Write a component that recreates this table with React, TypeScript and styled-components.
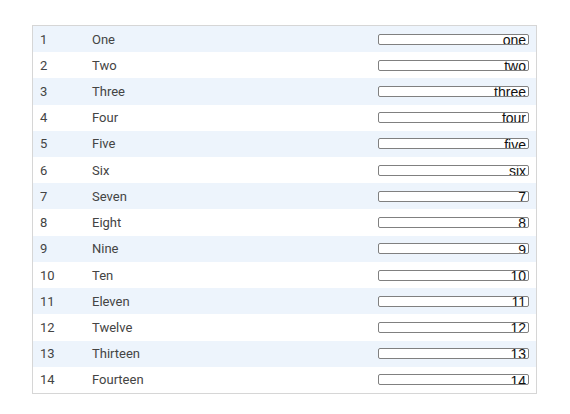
import React from "react";
import styled, { createGlobalStyle } from "styled-components";

const Global = createGlobalStyle`
  body {
    margin: 8px;
    background: #ffffff;
    font-family: Roboto, "Liberation Sans", sans-serif;
  }
`;

const Panel = styled.div`
  margin: 17px 0 0 24px;
  width: 503px;
  height: 367px;
  border: 1px solid #d6d6d6;
  display: grid;
  grid-template-rows: repeat(14, 1fr);
`;

const Row = styled.div<{ $odd: boolean }>`
  display: grid;
  grid-template-columns: 52px 1fr 151px;
  align-items: center;
  padding: 0 7px 0 7px;
  background: ${(p) => (p.$odd ? "#edf4fc" : "#ffffff")};
  color: #444444;
  font-size: 13px;
`;

const Num = styled.span``;
const Name = styled.span``;

const FieldBox = styled.div`
  box-sizing: border-box;
  width: 151px;
  height: 11px;
  border: 1px solid #808080;
  border-radius: 2px;
  background: #ffffff;
  overflow: hidden;
`;

const Field = styled.input`
  display: block;
  box-sizing: border-box;
  width: 100%;
  height: 20px;
  margin: -4.8px 0 0 0;
  padding: 0 2px;
  border: none;
  background: transparent;
  color: #111111;
  font-family: "Liberation Sans", Arial, sans-serif;
  font-size: 14px;
  text-align: right;
  outline: none;
`;

const rows = [
  ["One", "one"],
  ["Two", "two"],
  ["Three", "three"],
  ["Four", "four"],
  ["Five", "five"],
  ["Six", "six"],
  ["Seven", "7"],
  ["Eight", "8"],
  ["Nine", "9"],
  ["Ten", "10"],
  ["Eleven", "11"],
  ["Twelve", "12"],
  ["Thirteen", "13"],
  ["Fourteen", "14"],
];

export default function App() {
  return (
    <>
      <Global />
      <Panel>
        {rows.map(([name, val], i) => (
          <Row key={i} $odd={i % 2 === 0}>
            <Num>{i + 1}</Num>
            <Name>{name}</Name>
            <FieldBox>
              <Field defaultValue={val} readOnly />
            </FieldBox>
          </Row>
        ))}
      </Panel>
    </>
  );
}
